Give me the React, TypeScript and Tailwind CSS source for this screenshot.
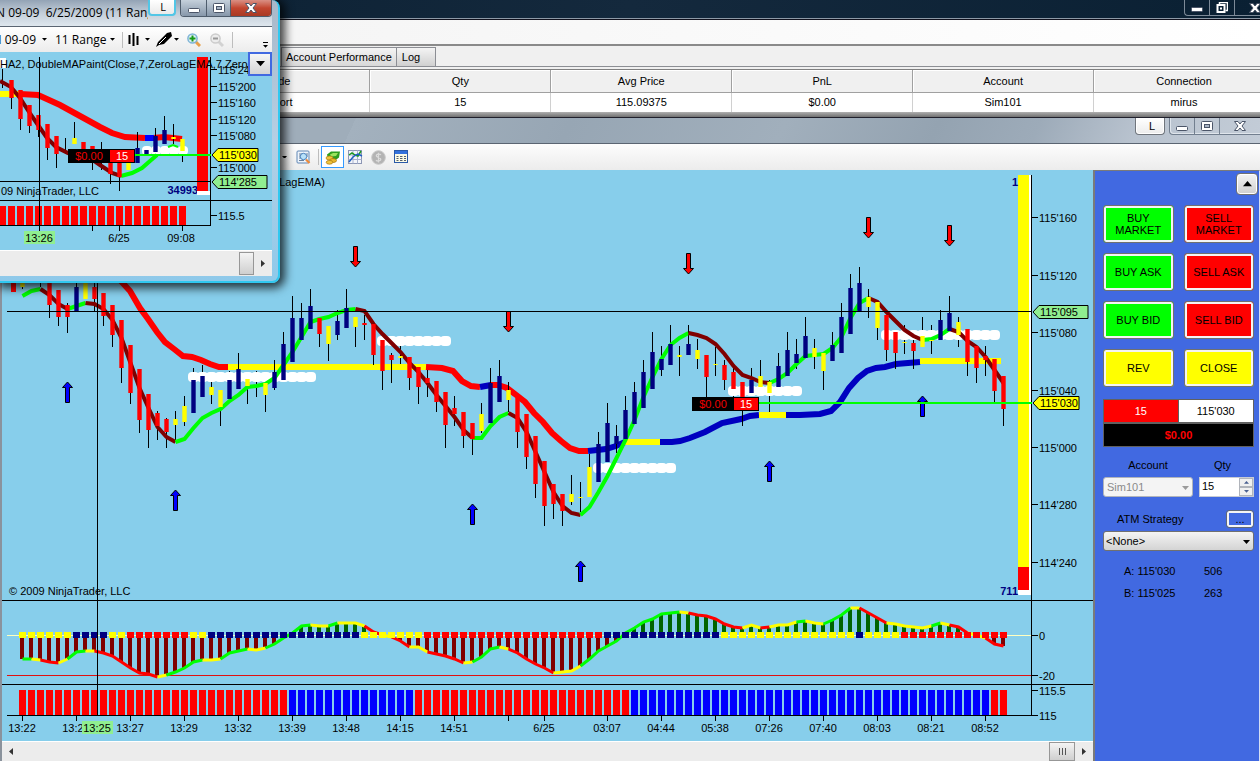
import React, { useState } from 'react';
import clsx from 'clsx';

type Tone = 'R' | 'Y' | 'B' | 'G' | 'M' | 'N' | 'W';
// tone, high, body top, body bottom, low
type Candle = [Tone, number, number, number, number];
// tone, first bar, last bar
type Run = [Tone, number, number];
type Point = [number, number];

const TONES: Record<Tone, string> = {
  R: '#ff0000',
  Y: '#ffff00',
  B: '#000080',
  G: '#00ff00',
  M: '#800000',
  N: '#0000c0',
  W: '#0000ff'
};

const STEP = 9;
const FIRST_BAR = 22;

const barX = (i: number) => FIRST_BAR + i * STEP;

const candles: Candle[] = [
  ['Y', 270, 270, 287, 289], ['B', 270, 271, 280, 280], ['B', 270, 271, 282, 287], ['R', 272, 272, 305, 318],
  ['R', 290, 290, 317, 326], ['R', 303, 305, 317, 333], ['B', 278, 287, 311, 311], ['Y', 272, 275, 299, 299],
  ['R', 275, 287, 299, 311], ['R', 293, 293, 316, 326], ['R', 305, 305, 335, 347], ['R', 320, 320, 368, 383],
  ['R', 345, 345, 393, 404], ['R', 369, 369, 420, 433], ['R', 394, 394, 430, 448], ['R', 411, 413, 426, 440],
  ['R', 418, 419, 432, 448], ['Y', 411, 419, 425, 440], ['Y', 396, 406, 422, 426], ['B', 368, 380, 413, 413],
  ['B', 365, 376, 397, 397], ['Y', 382, 387, 395, 404], ['Y', 390, 390, 407, 426], ['B', 371, 380, 399, 399],
  ['B', 353, 369, 389, 389], ['Y', 379, 379, 386, 404], ['Y', 371, 384, 384, 397], ['Y', 380, 383, 395, 412],
  ['B', 360, 372, 388, 390], ['B', 332, 344, 380, 380], ['B', 296, 318, 362, 362], ['B', 303, 318, 340, 340],
  ['B', 289, 306, 329, 329], ['R', 318, 318, 334, 347], ['Y', 326, 326, 344, 361], ['B', 310, 321, 335, 340],
  ['B', 289, 308, 328, 328], ['Y', 317, 317, 327, 347], ['R', 315, 323, 325, 340], ['R', 324, 324, 355, 365],
  ['R', 340, 340, 371, 390], ['R', 353, 355, 360, 383], ['Y', 346, 356, 358, 364], ['R', 357, 357, 378, 390],
  ['R', 367, 367, 387, 404], ['R', 370, 378, 383, 397], ['R', 381, 381, 402, 412], ['R', 392, 392, 425, 448],
  ['R', 396, 408, 414, 426], ['R', 412, 412, 436, 448], ['R', 423, 423, 439, 455], ['Y', 403, 414, 431, 433],
  ['B', 368, 383, 423, 423], ['B', 360, 376, 402, 402], ['Y', 382, 390, 400, 412], ['R', 398, 398, 432, 448],
  ['R', 414, 414, 457, 469], ['R', 436, 436, 484, 498], ['R', 461, 461, 506, 526], ['R', 484, 484, 504, 519],
  ['R', 494, 494, 511, 526], ['Y', 475, 494, 502, 505], ['Y', 482, 497, 498, 512], ['Y', 454, 467, 497, 497],
  ['B', 432, 444, 482, 482], ['B', 403, 423, 462, 462], ['B', 425, 436, 444, 453], ['B', 396, 410, 439, 439],
  ['B', 382, 392, 424, 424], ['B', 360, 372, 408, 408], ['B', 332, 352, 389, 389], ['B', 346, 359, 370, 376],
  ['B', 325, 344, 365, 365], ['Y', 346, 355, 357, 376], ['B', 325, 344, 355, 355], ['Y', 339, 350, 359, 369],
  ['R', 355, 355, 377, 398], ['Y', 347, 364, 365, 376], ['R', 360, 365, 380, 390], ['R', 368, 372, 389, 397],
  ['R', 382, 382, 399, 426], ['B', 368, 380, 393, 393], ['Y', 360, 376, 387, 387], ['Y', 380, 382, 393, 412],
  ['B', 353, 366, 387, 387], ['B', 332, 350, 376, 376], ['B', 339, 354, 363, 369], ['B', 317, 336, 358, 358],
  ['Y', 339, 348, 357, 369], ['Y', 353, 353, 371, 390], ['B', 332, 345, 361, 361], ['B', 303, 317, 353, 353],
  ['B', 274, 288, 334, 334], ['B', 267, 283, 311, 311], ['Y', 289, 297, 307, 318], ['Y', 302, 302, 328, 340],
  ['R', 315, 315, 350, 361], ['R', 332, 332, 353, 369], ['Y', 325, 342, 343, 354], ['R', 340, 343, 351, 369],
  ['Y', 317, 336, 347, 347], ['Y', 325, 340, 341, 354], ['B', 310, 320, 340, 340], ['B', 296, 313, 331, 331],
  ['Y', 317, 322, 335, 347], ['R', 329, 329, 362, 376], ['R', 346, 346, 368, 383], ['R', 346, 356, 360, 376],
  ['R', 359, 359, 391, 402], ['R', 376, 376, 409, 426]
];

const fastAverage = [
  296, 291, 289, 295, 304, 309, 306, 303, 304, 309, 320, 338, 363, 388, 408, 427, 437, 442, 439, 428,
  418, 413, 409, 401, 395, 387, 386, 384, 378, 365, 352, 337, 322, 319, 317, 313, 310, 309, 311, 324,
  334, 343, 352, 363, 372, 383, 395, 406, 417, 430, 438, 438, 426, 417, 413, 418, 432, 452, 472, 492,
  506, 513, 515, 507, 492, 476, 458, 440, 420, 397, 377, 359, 345, 338, 333, 335, 338, 344, 354, 366,
  375, 378, 382, 383, 379, 373, 364, 356, 355, 354, 348, 337, 318, 303, 298, 302, 312, 321, 330, 336,
  340, 339, 335, 329, 332, 341, 347, 357, 370, 383
];
const fastRuns: Run[] = [
  ['G', 0, 2], ['M', 2, 5], ['G', 5, 7], ['M', 7, 17], ['G', 17, 37], ['M', 37, 50], ['G', 50, 54], ['M', 54, 62],
  ['G', 62, 74], ['M', 74, 83], ['G', 83, 94], ['M', 94, 100], ['G', 100, 103], ['M', 103, 109]
];

const slowAverage: [Tone, Point[]][] = [
  ['R', [[90, 273], [108, 274], [120, 280], [130, 291], [140, 308], [148, 319], [157, 332], [165, 342], [174, 349], [183, 356], [192, 357], [201, 360], [210, 364], [219, 367], [228, 367]]],
  ['Y', [[228, 367], [426, 367]]],
  ['R', [[426, 367], [442, 368], [453, 371], [462, 381], [471, 386], [480, 387]]],
  ['R', [[490, 385], [498, 385], [507, 388], [515, 394], [525, 402], [534, 413], [543, 422], [552, 433], [561, 441], [570, 448], [579, 451], [588, 451]]],
  ['N', [[480, 387], [491, 385]]],
  ['N', [[588, 451], [606, 449], [616, 446], [625, 442]]],
  ['Y', [[625, 442], [660, 442]]],
  ['N', [[660, 442], [672, 442], [680, 441], [690, 438], [705, 432], [722, 423], [741, 419], [750, 416], [759, 415]]],
  ['Y', [[759, 415], [786, 415]]],
  ['N', [[786, 415], [800, 415], [820, 414], [831, 411], [840, 402], [849, 388], [858, 378], [867, 371], [876, 368], [885, 367], [896, 364], [920, 362]]],
  ['Y', [[920, 361], [1001, 361]]]
];

// y, first bar, last bar
const dotRows = [[377, 19, 32], [341, 40, 47], [468, 64, 72], [391, 79, 86], [335, 96, 108]];

const oscillator = [
  659, 659, 660, 662, 663, 659, 652, 651, 651, 653, 656, 662, 668, 673, 674, 677, 675, 672, 668, 662,
  660, 660, 659, 653, 651, 649, 650, 648, 644, 638, 633, 626, 625, 626, 626, 623, 623, 623, 626, 632,
  635, 637, 641, 647, 647, 652, 654, 656, 659, 663, 662, 657, 649, 647, 649, 653, 659, 664, 668, 673,
  672, 671, 666, 659, 651, 646, 641, 633, 628, 622, 619, 614, 613, 612, 613, 615, 616, 619, 624, 627,
  628, 625, 628, 627, 625, 625, 622, 621, 623, 624, 620, 615, 608, 608, 613, 618, 623, 624, 626, 627,
  628, 626, 623, 625, 627, 633, 635, 638, 644, 646
];
const oscillatorRuns: Run[] = [
  ['G', 0, 1], ['Y', 1, 2], ['R', 2, 4], ['Y', 4, 5], ['G', 5, 7], ['Y', 7, 8], ['R', 8, 15], ['Y', 15, 16],
  ['G', 16, 20], ['Y', 20, 22], ['G', 22, 25], ['Y', 25, 27], ['G', 27, 32], ['Y', 32, 34], ['G', 34, 35],
  ['Y', 35, 38], ['R', 38, 40], ['Y', 40, 41], ['R', 41, 43], ['Y', 43, 45], ['R', 45, 49], ['Y', 49, 50],
  ['G', 50, 53], ['Y', 53, 54], ['R', 54, 59], ['Y', 59, 62], ['G', 62, 73], ['Y', 73, 74], ['R', 74, 80],
  ['Y', 80, 82], ['R', 82, 83], ['Y', 83, 86], ['G', 86, 87], ['Y', 87, 89], ['G', 89, 92], ['Y', 92, 93],
  ['R', 93, 96], ['Y', 96, 101], ['G', 101, 102], ['Y', 102, 103], ['R', 103, 105], ['Y', 105, 107], ['R', 107, 109]
];
const squareRuns: Run[] = [
  ['Y', 0, 5], ['B', 6, 9], ['Y', 10, 11], ['R', 12, 18], ['Y', 19, 20], ['B', 21, 37], ['Y', 38, 44],
  ['R', 45, 64], ['B', 65, 77], ['Y', 78, 92], ['B', 93, 93], ['Y', 94, 97], ['R', 98, 109]
];
const trendRuns: Run[] = [['R', 0, 29], ['W', 30, 43], ['R', 44, 67], ['W', 68, 107], ['R', 108, 109]];

const upArrows: Point[] = [[67, 382], [175, 490], [472, 504], [580, 561], [769, 461], [922, 396]];
const downArrows: Point[] = [[355, 267], [508, 332], [688, 274], [868, 238], [949, 246]];

const priceTicks: [string, number][] = [
  ["115'160", 217], ["115'120", 275], ["115'080", 332], ["115'040", 390], ["115'000", 447], ["114'280", 504],
  ["114'240", 562], ['0', 635], ['-20', 675], ['115.5', 690], ['115', 715]
];
const timeTicks: [string, number][] = [
  ['13:22', 22], ['13:24', 76], ['13:27', 130], ['13:29', 184], ['13:32', 238], ['13:39', 292], ['13:48', 346],
  ['14:15', 400], ['14:51', 454], ['', 508], ['6/25', 544], ['03:07', 607], ['04:44', 661], ['05:38', 715],
  ['07:26', 769], ['07:40', 823], ['08:03', 877], ['08:21', 931], ['08:52', 985]
];

const toPoints = (points: Point[]) => points.map(p => p.join(',')).join(' ');

const expandRuns = (runs: Run[]) =>
  runs.flatMap(([tone, from, to]) => Array.from({ length: to - from + 1 }, (_, n) => ({ tone, i: from + n })));

const RunLine: React.FC<{ values: number[]; runs: Run[]; width: number }> = ({ values, runs, width }) => (
  <g fill="none" strokeWidth={width}>
    {runs.map(([tone, from, to]) => (
      <polyline
        key={from}
        stroke={TONES[tone]}
        points={toPoints(values.slice(from, to + 1).map((y, n): Point => [barX(from + n) + 0.5, y]))}
      />
    ))}
  </g>
);

const Wicks: React.FC<{ data: Candle[]; start: number }> = ({ data, start }) => (
  <g fill="black" shapeRendering="crispEdges">
    {data.map(([, high, , , low], i) => (
      <rect key={i} x={start + i * STEP} y={high} width={1} height={low - high} />
    ))}
  </g>
);

const Bodies: React.FC<{ data: Candle[]; start: number }> = ({ data, start }) => (
  <g>
    {data.map(([tone, , top, bottom], i) => (
      <rect key={i} x={start + i * STEP - 1.7} y={top} width={4.4} height={bottom - top} fill={TONES[tone]} />
    ))}
  </g>
);

const PriceFlag: React.FC<{ x: number; y: number; width: number; fill: string; label: string }> = ({ x, y, width, fill, label }) => (
  <g>
    <path d={`M${x} ${y} l6 -6.5 h${width - 6} v13 h-${width - 6} z`} fill={fill} stroke="black" />
    <text x={x + 7} y={y + 4}>{label}</text>
  </g>
);

const PositionTag: React.FC<{ x: number; y: number }> = ({ x, y }) => (
  <g>
    <rect x={x} y={y} width={67} height={14} fill="black" />
    <rect x={x + 42} y={y + 1} width={24} height={12} fill="#ff0000" />
    <text x={x + 21} y={y + 11} textAnchor="middle" fill="#f00000">$0.00</text>
    <text x={x + 54} y={y + 11} textAnchor="middle" fill="white">15</text>
  </g>
);

const MainChart: React.FC = () => (
  <svg width="1091" height="571" viewBox="2 170 1091 571" className="block shrink-0 font-['Liberation_Sans',sans-serif] text-[11px]">
    <text x={325} y={186} textAnchor="end">ZeroLagEMA)</text>
    <text x={9} y={595}>© 2009 NinjaTrader, LLC</text>

    <g fill="none" strokeWidth={6}>
      {slowAverage.map(([tone, points], i) => (
        <polyline key={i} stroke={TONES[tone]} points={toPoints(points)} />
      ))}
    </g>
    <rect x={13} y={280} width={1} height={12} />
    <rect x={11} y={275} width={5} height={17} fill="#ff0000" />
    <Wicks data={candles} start={FIRST_BAR} />
    <g fill="white">
      {dotRows.flatMap(([y, from, to]) =>
        Array.from({ length: to - from + 1 }, (_, n) => (
          <rect key={`${y}-${n}`} x={barX(from + n) - 5} y={y - 5} width={11} height={10} rx={4} />
        ))
      )}
    </g>
    <RunLine values={fastAverage} runs={fastRuns} width={4} />
    <Bodies data={candles} start={FIRST_BAR} />

    <g stroke="black">
      {upArrows.map(([x, y]) => (
        <path key={x} d={`M${x + 0.5} ${y} l5 5.5 h-3 v15 h-4 v-15 h-3 z`} fill="#0000ff" />
      ))}
      {downArrows.map(([x, y]) => (
        <path key={x} d={`M${x + 0.5} ${y} l5 -5.5 h-3 v-15 h-4 v15 h-3 z`} fill="#ff0000" />
      ))}
    </g>

    {/* volume column */}
    <g shapeRendering="crispEdges">
      <rect x={1018} y={175} width={13} height={420} fill="white" />
      <rect x={1018} y={175} width={11} height={393} fill="#ffff00" />
      <rect x={1018} y={567} width={11} height={23} fill="#ff0000" />
    </g>
    <g fill="#000080" fontWeight="bold" textAnchor="end">
      <text x={1018} y={186}>1</text>
      <text x={1018} y={595}>711</text>
    </g>

    {/* oscillator pane */}
    <g shapeRendering="crispEdges">
      <rect x={7} y={635} width={1024} height={1} fill="#ffffc0" />
      <rect x={7} y={675} width={1024} height={1} fill="#e01010" />
      {oscillator.map((y, i) => (
        <rect
          key={i}
          x={barX(i) - 2}
          y={Math.min(y, 635)}
          width={4}
          height={Math.abs(y - 635)}
          fill={y > 635 ? '#800000' : '#006400'}
        />
      ))}
    </g>
    <RunLine values={oscillator} runs={oscillatorRuns} width={3} />
    <g shapeRendering="crispEdges">
      {expandRuns(squareRuns).map(({ tone, i }) => (
        <rect key={i} x={barX(i) - 3} y={632} width={7} height={6} fill={TONES[tone]} />
      ))}
      {expandRuns(trendRuns).map(({ tone, i }) => (
        <rect key={i} x={barX(i) - 3} y={690} width={7} height={25} fill={TONES[tone]} />
      ))}
    </g>

    {/* pane borders, crosshair and axes */}
    <g shapeRendering="crispEdges">
      <rect x={2} y={600} width={1091} height={1} />
      <rect x={2} y={684} width={1091} height={1} />
      <rect x={7} y={715} width={1025} height={1} />
      <rect x={1031} y={175} width={1} height={541} />
      <rect x={7} y={311} width={1025} height={1} />
      <rect x={97} y={275} width={1} height={440} />
      <rect x={759} y={402} width={273} height={2} fill="#00ff00" />
      {priceTicks.map(([label, y]) => <rect key={label} x={1032} y={y} width={6} height={1} />)}
      {timeTicks.map(([, x]) => <rect key={x} x={x} y={716} width={1} height={5} />)}
    </g>
    {priceTicks.map(([label, y]) => (
      <text key={label} x={1039} y={y + 5}>{label}</text>
    ))}
    {timeTicks.map(([label, x]) => (
      <text key={x} x={x} y={732} textAnchor="middle">{label}</text>
    ))}
    <rect x={82} y={721} width={31} height={13} fill="#90ee90" />
    <text x={97} y={732} textAnchor="middle">13:25</text>
    <PriceFlag x={1033} y={312} width={55} fill="#90ee90" label="115'095" />
    <PriceFlag x={1033} y={403} width={46} fill="#ffff00" label="115'030" />
    <PositionTag x={692} y={397} />
  </svg>
);

const miniCandles: Candle[] = [
  ['R', 69, 80, 80, 88], ['R', 80, 80, 98, 109], ['R', 90, 90, 119, 130], ['R', 105, 105, 126, 133],
  ['R', 115, 115, 130, 137], ['R', 124, 124, 148, 160], ['R', 136, 136, 154, 168], ['R', 138, 150, 150, 154],
  ['Y', 122, 138, 144, 144], ['R', 142, 142, 152, 158], ['R', 146, 146, 160, 170], ['R', 142, 152, 152, 170],
  ['R', 155, 155, 174, 184], ['R', 158, 158, 177, 191], ['Y', 158, 158, 170, 170], ['B', 132, 148, 163, 163],
  ['B', 148, 150, 154, 154], ['B', 128, 136, 152, 152], ['B', 116, 130, 144, 144], ['Y', 124, 137, 139, 144],
  ['Y', 139, 139, 151, 162]
];
const miniPrices: [string, number][] = [
  ["115'240", 69], ["115'200", 86], ["115'160", 102], ["115'120", 119], ["115'080", 135], ["115'000", 167], ['115.5', 215]
];

const MiniChart: React.FC = () => (
  <svg width="272" height="198" viewBox="0 52 272 198" className="block font-['Liberation_Sans',sans-serif] text-[11px]">
    <rect x={0} y={58} width={6} height={10} fill="white" />
    <text x={198} y={194} textAnchor="end" fontWeight="bold" fill="#000080">34993</text>
    <text x={99} y={195} textAnchor="end">09 NinjaTrader, LLC</text>
    <g fill="none" strokeWidth={6}>
      <polyline stroke="#ffff00" points="0,94 20,94" />
      <polyline stroke="#ff0000" points="20,94 38,95 60,105 80,116 100,127 112,133 125,137 145,138" />
      <polyline stroke="#ff0000" points="153,138 164,137 182,139" />
      <polyline stroke="#0000ff" points="145,138 154,138" />
    </g>
    <Wicks data={miniCandles} start={2} />
    <g fill="white">
      {[147, 156, 165, 174, 183].map(x => <rect key={x} x={x - 5} y={146} width={10} height={9} rx={4} />)}
    </g>
    <g fill="none" strokeWidth={4}>
      <polyline stroke="#800000" points="0,81 11,87 20,98 29,112 38,125 47,138 56,147 68,153 90,158 100,165 112,173 121,176" />
      <polyline stroke="#00ff00" points="121,176 132,173 142,168 150,161 157,155" />
      <polyline stroke="#00ff00" strokeWidth={2} points="168,147 173,145 178,147" />
    </g>
    <Bodies data={miniCandles} start={2} />
    <g shapeRendering="crispEdges">
      <rect x={197} y={57} width={13} height={138} fill="white" />
      <rect x={197} y={57} width={11} height={134} fill="#ff0000" />
      <rect x={208} y={57} width={2} height={134} fill="#87ceeb" />
      {miniCandles.map((_, i) => (
        <rect key={i} x={i * STEP - 1} y={206} width={7} height={19} fill="#ff0000" />
      ))}
      <rect x={0} y={181} width={211} height={1} />
      <rect x={0} y={200} width={272} height={1} />
      <rect x={0} y={225} width={211} height={1} />
      <rect x={39} y={57} width={1} height={168} />
      <rect x={210} y={57} width={1} height={169} />
      <rect x={135} y={154} width={76} height={2} fill="#00ff00" />
      {[39, 92, 119, 182].map(x => <rect key={x} x={x} y={226} width={1} height={5} />)}
      {miniPrices.map(([label, y]) => <rect key={label} x={211} y={y} width={6} height={1} />)}
    </g>
    {miniPrices.map(([label, y]) => <text key={label} x={218} y={y + 5}>{label}</text>)}
    <text x={0} y={68}>HA2, DoubleMAPaint(Close,7,ZeroLagEMA,7,Zero</text>
    <rect x={24} y={231} width={31} height={13} fill="#90ee90" />
    <g textAnchor="middle">
      <text x={39} y={242}>13:26</text>
      <text x={119} y={242}>6/25</text>
      <text x={181} y={242}>09:08</text>
    </g>
    <PriceFlag x={212} y={155} width={46} fill="#ffff00" label="115'030" />
    <PriceFlag x={212} y={182} width={55} fill="#90ee90" label="114'285" />
    <PositionTag x={68} y={149} />
  </svg>
);

const Caret: React.FC<{ up?: boolean; className?: string }> = ({ up, className }) => (
  <svg viewBox="0 0 7 4" className={clsx('h-auto shrink-0', className)}>
    <path d={up ? 'M0 4h7L3.5 0z' : 'M0 0h7L3.5 4z'} fill="currentColor" />
  </svg>
);

const MinimizeGlyph = () => (
  <svg width="12" height="5" viewBox="0 0 12 5"><rect x=".5" y=".5" width="11" height="4" rx="1" fill="white" stroke="#4b5568" /></svg>
);
const MaximizeGlyph = () => (
  <svg width="12" height="10" viewBox="0 0 12 10">
    <rect x=".5" y=".5" width="11" height="9" rx="1" fill="white" stroke="#4b5568" />
    <rect x="3.5" y="3.5" width="5" height="3" fill="#a8b4c4" stroke="#4b5568" />
  </svg>
);
const RestoreGlyph = () => (
  <svg width="12" height="11" viewBox="0 0 12 11" fill="none">
    <path d="M3.5 2.5v-2h8v8h-2" stroke="white" strokeWidth="1.5" />
    <rect x="1.5" y="3" width="7" height="7" stroke="white" strokeWidth="2" />
    <rect x="4" y="5.5" width="2" height="2" fill="white" />
  </svg>
);
const CloseGlyph = () => (
  <svg width="12" height="10" viewBox="0 0 12 10">
    <path d="M.5 .5h3.5L6 3 8 .5h3.5L8 5l3.5 4.500H8L6 7 4 9.500H.5L4 5z" fill="white" stroke="#4b5568" />
  </svg>
);

const ScrollArrow: React.FC<{ left?: boolean }> = ({ left }) => (
  <svg width="4" height="7" viewBox="0 0 4 7"><path d={left ? 'M4 0v7L0 3.500z' : 'M0 0v7l4-3.500z'} fill="#333" /></svg>
);

const ControlCenter: React.FC = () => {
  const columns = ['Side', 'Qty', 'Avg Price', 'PnL', 'Account', 'Connection'];
  const position = ['Short', '15', '115.09375', '$0.00', 'Sim101', 'mirus'];

  return (
    <section className="overflow-hidden">
      <header className="flex h-5 justify-end border-b border-[#10101c] bg-linear-to-r from-[#0a1f31] via-[#14293d] via-50% to-[#0a2033] shadow-[inset_0_-1px_#8d99a6]">
        <div className="-mr-[15px] flex h-4 divide-x divide-[#7d8a98] rounded-bl border-b border-l border-[#7d8a98]">
          <button aria-label="Minimize" className="flex w-[25px] items-center justify-center pt-1"><MinimizeGlyph /></button>
          <button aria-label="Restore" className="flex w-[25px] items-center justify-center"><RestoreGlyph /></button>
          <button aria-label="Close" className="flex w-10 items-center justify-center"><CloseGlyph /></button>
        </div>
      </header>
      <div className="h-[26px] border-b-2 border-[#8a8a8a] bg-linear-to-r from-[#f2f2f2] to-white" />
      <nav className="flex h-[21px] items-end border-b border-[#8c8e94] bg-[#f0f0f0] pl-[281px]">
        <button className="h-[19px] border border-b-0 border-[#8c8e94] bg-linear-to-b from-[#f4f4f4] to-[#d8d8d8] px-1">Account Performance</button>
        <button className="h-[19px] border border-b-0 border-l-0 border-[#8c8e94] bg-linear-to-b from-[#f4f4f4] to-[#d0d0d0] pr-[15px] pl-[5px]">Log</button>
      </nav>
      <div className="h-[3px] border-b border-[#808080] bg-[#f0f0f0]" />
      <table className="w-[calc(100%+15px)] table-fixed border-collapse bg-white text-center">
        <thead>
          <tr className="h-[22px] bg-[#f0f0f0]">
            <th className="w-[189px] border-r border-b border-[#a0a0a0]" />
            {columns.map(column => (
              <th key={column} className="border-r border-b border-[#a0a0a0] font-normal shadow-[inset_1px_1px_white]">{column}</th>
            ))}
          </tr>
        </thead>
        <tbody>
          <tr className="h-5">
            <td className="border-r border-[#d0d0d0]" />
            {position.map(value => (
              <td key={value} className="border-r border-[#d0d0d0]">{value}</td>
            ))}
          </tr>
        </tbody>
      </table>
      <div className="h-[6px] border-b border-[#20202c] bg-linear-to-b from-[#b0b0b0] to-[#707070]" />
    </section>
  );
};

const ChartTitleBar: React.FC = () => (
  <header className="flex h-[26px] justify-end gap-1 overflow-hidden border-b border-[#5b6572] bg-[linear-gradient(115deg,#9fadba_0%,#9fadba_28%,#a3b1be_28%,#97a6b4_45%,#a1afbc_62%,#94a3b1_74%,#9dabb9_82%,#b9c3cf_90%,#c3ccd7_100%)]">
    <button className="h-[17px] w-[30px] rounded-b border border-t-0 border-[#70757c] bg-linear-to-b from-white to-[#ececec] pl-1 shadow-[inset_0_0_0_1px_white]">L</button>
    <div className="flex h-[17px] divide-x divide-[#727f8f] rounded-bl border-b border-l border-[#727f8f] shadow-[inset_1px_-1px_#dfe5ec]">
      <button aria-label="Minimize" className="flex w-[25px] items-center justify-center pt-1"><MinimizeGlyph /></button>
      <button aria-label="Maximize" className="flex w-[25px] items-center justify-center"><MaximizeGlyph /></button>
      <button aria-label="Close" className="flex w-10 items-center justify-center"><CloseGlyph /></button>
    </div>
  </header>
);

const ChartToolbar: React.FC = () => (
  <div className="flex h-[26px] items-center bg-linear-to-b from-[#fdfdfd] to-[#ececec] pl-[282px]">
    <Caret className="w-[5px]" />
    <button aria-label="Zoom to range" className="ml-[9px]">
      <svg width="15" height="15" viewBox="0 0 15 15">
        <rect x="1" y="1" width="12" height="12" rx="1" fill="#eef4fb" stroke="#5f86b5" />
        <path d="M3 4h3M3 6h2M3 8h2M3 10.500h5M10 4h2M11 6h1" stroke="#6a7f99" />
        <circle cx="7.500" cy="6.500" r="3.200" fill="#b9e2fa" stroke="#4a80ba" />
        <path d="M10 9.500l3.500 3.500" stroke="#ee8a3a" strokeWidth="2.200" />
      </svg>
    </button>
    <span className="mr-[2px] ml-[7px] h-4 w-px bg-[#bdbdbd]" />
    <button aria-label="Chart trader" className="flex h-[22px] w-[23px] items-center justify-center border border-[#3399ff] bg-white">
      <svg width="16" height="15" viewBox="0 0 16 15">
        <path d="M2 4.500L6 1.500h9l-1 6-4 3-7-1z" fill="#2f9e1f" />
        <path d="M5 4.500l3-1.500h5l-2 3-5 .5z" fill="#9be35e" />
        <ellipse cx="4.500" cy="8" rx="3.500" ry="2" fill="#f0c43c" stroke="#b07d12" strokeWidth=".7" />
        <ellipse cx="8" cy="10.500" rx="3.500" ry="2" fill="#eab82c" stroke="#a8740c" strokeWidth=".7" />
        <ellipse cx="4.500" cy="12.300" rx="3.300" ry="1.900" fill="#f0c43c" stroke="#a8740c" strokeWidth=".7" />
      </svg>
    </button>
    <button aria-label="Indicators" className="ml-1">
      <svg width="15" height="15" viewBox="0 0 15 15" fill="none">
        <rect x=".5" y=".5" width="13" height="13" fill="#f3f5fa" stroke="#8d97b5" />
        <path d="M.5 5h13M.5 9.500h13M5 .5v13M9.500.5v13" stroke="#a9b3cf" />
        <path d="M1 5l3-2 3 2 3 1 3-5" stroke="#1e9a1e" strokeWidth="1.500" />
        <path d="M1 12l4-5 3-2 2-1 4 2" stroke="#2360c0" strokeWidth="1.500" />
      </svg>
    </button>
    <button aria-label="Account" disabled className="ml-2">
      <svg width="15" height="15" viewBox="0 0 15 15">
        <circle cx="7.500" cy="7.500" r="6.800" fill="#b4b4b4" stroke="#c8c8c8" />
        <path d="M10 4.800C8.500 3.600 5.300 3.900 5.300 5.700S9.800 7.300 9.800 9.300 6.300 11.400 5 10.200M7.500 2.800v9.600" stroke="#dcdcdc" strokeWidth="1.300" fill="none" />
      </svg>
    </button>
    <button aria-label="Properties" className="ml-2">
      <svg width="15" height="14" viewBox="0 0 15 14">
        <rect x=".5" y=".5" width="13" height="12" fill="#fdfbe4" stroke="#2a5aa8" />
        <rect x="1" y="1" width="12" height="3" fill="#3472dd" />
        <path d="M2.500 6.500h2M2.500 8.500h2M2.500 10.500h2M6 6.500h2.500M6 8.500h2.500M6 10.500h2.500M10 6.500h2M10 8.500h2M10 10.500h2" stroke="#55606e" />
      </svg>
    </button>
  </div>
);

const orderButtons = [
  { label: 'BUY MARKET', color: 'bg-[#00ff00]' },
  { label: 'SELL MARKET', color: 'bg-[#ff0000]' },
  { label: 'BUY ASK', color: 'bg-[#00ff00]' },
  { label: 'SELL ASK', color: 'bg-[#ff0000]' },
  { label: 'BUY BID', color: 'bg-[#00ff00]' },
  { label: 'SELL BID', color: 'bg-[#ff0000]' },
  { label: 'REV', color: 'bg-[#ffff00]' },
  { label: 'CLOSE', color: 'bg-[#ffff00]' }
];

const ChartTrader: React.FC = () => {
  const [qty, setQty] = useState(15);
  const [strategy, setStrategy] = useState('<None>');

  return (
    <aside className="w-[167px] shrink-0 border-t border-r border-l-2 border-t-[#7a7a7a] border-r-[#d5dff5] border-l-[#7a7a7a] bg-[#4169e1] pr-[5px] pl-2">
      <div className="-mr-1 flex justify-end pt-0.5">
        <button aria-label="Collapse" className="flex size-[22px] items-center justify-center rounded-sm border border-[#707070] bg-linear-to-b from-[#f4f4f4] to-[#cfcfcf] shadow-[inset_0_0_0_1px_white]">
          <Caret up className="w-[9px]" />
        </button>
      </div>

      <div className="mt-2.5 grid grid-cols-2 gap-x-2.5 gap-y-2.5">
        {orderButtons.map(({ label, color }) => (
          <button
            key={label}
            className={clsx('h-[38px] rounded-[3px] border border-[#707070] px-2 leading-[12px] shadow-[inset_0_0_0_2px_#f4f4f4]', color)}
          >
            {label}
          </button>
        ))}
      </div>

      <div className="mt-3 grid grid-cols-2 border border-[#606060] text-center leading-[22px]">
        <div className="border-r border-[#606060] bg-[#ff0000] text-white">15</div>
        <div className="bg-white">115'030</div>
        <div className="col-span-2 border-t-2 border-[#606060] bg-black font-bold text-[#ff0000]">$0.00</div>
      </div>

      <div className="mt-2.5 grid grid-cols-[90px_1fr] gap-x-[6px] gap-y-1">
        <label htmlFor="account" className="text-center leading-4">Account</label>
        <label htmlFor="qty" className="pr-2 text-center leading-4">Qty</label>
        <div className="relative">
          <select id="account" disabled defaultValue="Sim101" className="h-5 w-full appearance-none rounded-[3px] border border-[#b0b4bb] bg-[#f4f4f4] pl-[3px] text-[#8a8a8a] opacity-100">
            <option>Sim101</option>
          </select>
          <Caret className="pointer-events-none absolute top-[9px] right-1 w-[7px] text-[#9a9a9a]" />
        </div>
        <div className="flex h-5 border border-[#c8ccd4] bg-white">
          <input id="qty" value={qty} onChange={e => setQty(Number(e.target.value) || 0)} className="w-full min-w-0 bg-white pb-0.5 pl-0.5" />
          <div className="flex w-[14px] shrink-0 flex-col">
            <button aria-label="Increase" onClick={() => setQty(qty + 1)} className="flex flex-1 items-center justify-center border border-[#b0b4bb] bg-[#f0f0f0] text-[#4a6090]"><Caret up className="w-[5px]" /></button>
            <button aria-label="Decrease" onClick={() => setQty(qty - 1)} className="flex flex-1 items-center justify-center border border-[#b0b4bb] bg-[#f0f0f0] text-[#4a6090]"><Caret className="w-[5px]" /></button>
          </div>
        </div>
      </div>

      <div className="mt-[13px] flex items-center justify-between pl-[14px]">
        <label htmlFor="strategy">ATM Strategy</label>
        <button aria-label="Edit strategy" className="h-[18px] w-7 rounded-[3px] border border-[#606878] leading-[12px] shadow-[inset_0_0_0_2px_#f4f4f4]">...</button>
      </div>
      <div className="relative mt-[3px]">
        <select id="strategy" value={strategy} onChange={e => setStrategy(e.target.value)} className="h-5 w-full appearance-none rounded-[3px] border border-[#707070] bg-linear-to-b from-[#f4f4f4] to-[#d4d4d4] pl-[2px]">
          <option>{'<None>'}</option>
        </select>
        <Caret className="pointer-events-none absolute top-[9px] right-1 w-[7px]" />
      </div>

      <dl className="mt-[9px] grid grid-cols-[80px_1fr] pl-[21px] leading-[22px]">
        <dt>A: 115'030</dt>
        <dd>506</dd>
        <dt>B: 115'025</dt>
        <dd>263</dd>
      </dl>
    </aside>
  );
};

const ChartWindow: React.FC = () => (
  <section className="flex min-h-0 flex-1 flex-col">
    <ChartTitleBar />
    <ChartToolbar />
    <div className="flex min-h-0 flex-1">
      <div className="flex min-w-0 flex-1 flex-col overflow-hidden border-l-2 border-[#8a929c] bg-[#87ceeb]">
        <MainChart />
        <div className="flex flex-1 items-stretch border-t border-white bg-[#ececec]">
          <button aria-label="Scroll left" className="flex w-[17px] items-center justify-center"><ScrollArrow left /></button>
          <div className="flex flex-1 justify-end">
            <div className="flex w-[26px] items-center justify-center gap-[2px] border border-[#979797] bg-linear-to-b from-[#f4f4f4] to-[#cfcfcf]">
              <i className="h-[7px] w-px bg-[#555]" />
              <i className="h-[7px] w-px bg-[#555]" />
              <i className="h-[7px] w-px bg-[#555]" />
            </div>
          </div>
          <button aria-label="Scroll right" className="flex w-[18px] items-center justify-center"><ScrollArrow /></button>
        </div>
      </div>
      <ChartTrader />
    </div>
  </section>
);

const FloatingChart: React.FC = () => (
  <section className="absolute top-0 left-0 w-[280px] overflow-hidden rounded-r-lg border-r-2 border-b-2 border-[#30c8f0] bg-linear-to-b from-[#a9b8c8] via-[#b4cfe4] via-50% to-[#8ec9ea] pr-[6px] pb-[5px] shadow-[2px_2px_10px_3px_rgba(0,0,0,0.75)]">
    <header className="flex h-[26px] bg-linear-to-b from-[#93a3b5] via-[#c3ced9] to-[#dfe7ee] font-['Open_Sans',sans-serif] text-[12px]">
      <h1 className="-ml-1 w-[152px] shrink-0 overflow-hidden pt-1 whitespace-pre">N 09-09  6/25/2009 (11 Range)</h1>
      <button className="h-4 w-7 rounded-b border-2 border-t-0 border-[#52c6e6] bg-linear-to-b from-white to-[#eaeaea] pl-0.5 text-[11px] leading-[14px]">L</button>
      <div className="ml-1 flex h-[17px] flex-1 divide-x divide-[#4e5c6c] overflow-hidden rounded-b border border-t-0 border-[#4e5c6c]">
        <button aria-label="Minimize" className="flex w-[26px] items-center justify-center bg-linear-to-b from-[#c5d0db] to-[#8797aa] pt-1"><MinimizeGlyph /></button>
        <button aria-label="Maximize" className="flex w-6 items-center justify-center bg-linear-to-b from-[#c5d0db] to-[#8797aa]"><MaximizeGlyph /></button>
        <button aria-label="Close" className="flex flex-1 items-center justify-center bg-linear-to-b from-[#d98f84] via-[#c2452f] to-[#a83a24]"><CloseGlyph /></button>
      </div>
    </header>
    <div className="flex h-[26px] items-center border-t border-[#5b6572] bg-linear-to-b from-white to-[#ececec] font-['Open_Sans',sans-serif] text-[12px]">
      <button className="flex w-[47px] shrink-0 items-center justify-end gap-1.5 overflow-hidden whitespace-nowrap">
        N 09-09 <Caret className="w-[5px]" />
      </button>
      <button className="ml-2 flex w-[60px] shrink-0 items-center justify-between whitespace-nowrap">
        11 Range <Caret className="w-[5px]" />
      </button>
      <span className="mr-[5px] ml-[7px] h-4 w-px bg-[#bdbdbd]" />
      <button aria-label="Bar style" className="flex items-center gap-[5px]">
        <svg width="12" height="13" viewBox="0 0 12 13"><path d="M1.500 2v9M5.500 0v13M9.500 3v9" stroke="black" strokeWidth="2" /></svg>
        <Caret className="w-[5px]" />
      </button>
      <button aria-label="Drawing tools" className="ml-[6px] flex items-center gap-0.5">
        <svg width="16" height="15" viewBox="0 0 16 15">
          <path d="M0 15l2-5L11 1l4-1 1 4-8 8-5 1z" fill="black" />
          <path d="M3 12l7-7" stroke="white" />
        </svg>
        <Caret className="w-[5px]" />
      </button>
      <button aria-label="Zoom in" className="ml-2">
        <svg width="14" height="14" viewBox="0 0 14 14">
          <path d="M8.500 8.500l4.500 4.500" stroke="#e8a04a" strokeWidth="3" />
          <circle cx="5.500" cy="5.500" r="4.600" fill="#dff0f8" stroke="#7eb4d6" strokeWidth="1.500" />
          <path d="M5.500 2.500v6M2.500 5.500h6" stroke="#189a18" strokeWidth="2" />
        </svg>
      </button>
      <button aria-label="Zoom out" disabled className="ml-[9px]">
        <svg width="14" height="14" viewBox="0 0 14 14">
          <path d="M8.500 8.500l4.500 4.500" stroke="#d2d2d2" strokeWidth="3" />
          <circle cx="5.500" cy="5.500" r="4.600" fill="#ececec" stroke="#cccccc" strokeWidth="1.500" />
          <path d="M3 5.500h5" stroke="#999" strokeWidth="2" />
        </svg>
      </button>
      <span className="ml-2 h-4 w-px bg-[#bdbdbd]" />
      <button aria-label="More" className="mr-1 ml-auto flex h-full flex-col justify-end gap-0.5 pb-1">
        <i className="h-px w-[5px] bg-black" />
        <Caret className="w-[5px]" />
      </button>
    </div>
    <div className="relative bg-[#87ceeb]">
      <MiniChart />
      <button aria-label="Expand" className="absolute top-0 right-0 flex size-6 items-center justify-center border-2 border-[#4169e1] bg-linear-to-b from-[#f6f6f6] to-[#d4d4d4]">
        <Caret className="w-[9px]" />
      </button>
    </div>
    <div className="flex h-[26px] justify-end border-t border-white bg-[#ececec]">
      <div className="my-px w-[15px] border border-[#979797] bg-linear-to-b from-[#f4f4f4] to-[#cfcfcf]" />
      <button aria-label="Scroll right" className="flex w-[18px] items-center justify-center"><ScrollArrow /></button>
    </div>
  </section>
);

const App: React.FC = () => (
  <main className="relative flex h-screen flex-col overflow-hidden bg-[#f0f0f0] font-['Liberation_Sans',sans-serif] text-[11px] text-black">
    <ControlCenter />
    <ChartWindow />
    <FloatingChart />
  </main>
);

export default App;
